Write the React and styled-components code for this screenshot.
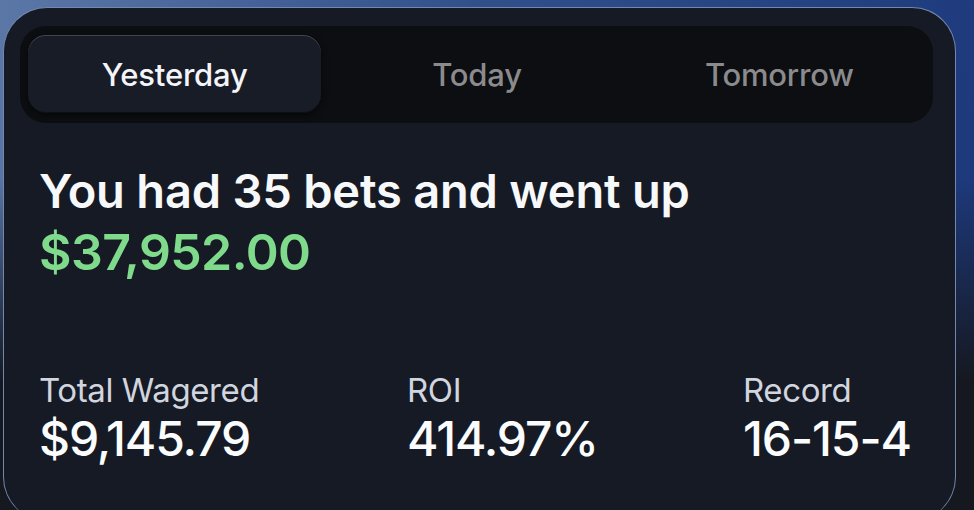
import React, { useState } from 'react';
import styled, { createGlobalStyle } from 'styled-components';

const Global = createGlobalStyle`
  html, body {
    margin: 0;
    padding: 0;
    width: 974px;
    height: 510px;
    overflow: hidden;
  }
  body {
    background:
      linear-gradient(to bottom, rgba(20, 23, 30, 0) 0%, rgba(20, 23, 30, 0) 35%, #15181f 75%),
      linear-gradient(100deg, #5a77a6 0%, #31508a 45%, #1b377b 100%);
    font-family: Inter, "Noto Sans", sans-serif;
  }
`

const Page = styled.div`
  width: 974px;
  height: 510px;
  padding: 7px 18px 0 3px;
  box-sizing: border-box;
  overflow: hidden;
`

const Card = styled.div`
  height: 514px;
  background: #161a24;
  border-radius: 44px;
  border: 1px solid #7388b0;
  border-bottom: none;
  padding: 18px 22px 0 16px;
  box-sizing: border-box;
`

const TabBar = styled.div`
  display: grid;
  grid-template-columns: repeat(3, 1fr);
  gap: 9px;
  height: 97px;
  background: #0d0e11;
  border-radius: 26px;
  padding: 9px 7px 10px 8px;
  box-sizing: border-box;
`

const Tab = styled.button`
  border: none;
  margin: 0;
  padding: 0;
  font-family: Inter, "Noto Sans", sans-serif;
  font-size: 31px;
  font-weight: 500;
  letter-spacing: -0.2px;
  cursor: pointer;
  border-radius: 18px;
  color: ${p => (p.$active ? '#f4f5f8' : '#8b8b8e')};
  background: ${p => (p.$active ? '#181c27' : 'transparent')};
  box-shadow: ${p =>
    p.$active
      ? 'inset 0 1px 0 rgba(255,255,255,0.18), inset 0 -1px 0 rgba(0,0,0,0.4), 0 2px 6px rgba(0,0,0,0.6)'
      : 'none'};
`

const Summary = styled.div`
  padding: 39px 0 0 19px;
`

const Headline = styled.div`
  font-size: 47px;
  font-weight: 600;
  letter-spacing: -0.2px;
  line-height: 58px;
  color: #f7f8fa;
`

const Amount = styled.div`
  margin-top: 3px;
  font-size: 50px;
  font-weight: 600;
  letter-spacing: -0.6px;
  line-height: 58px;
  color: #7fdb8b;
`

const Stats = styled.div`
  display: grid;
  grid-template-columns: 368px 336px 1fr;
  padding: 87px 0 0 19px;
`

const Stat = styled.div`
  display: flex;
  flex-direction: column;
`

const Label = styled.span`
  font-size: 33px;
  font-weight: 400;
  letter-spacing: -0.4px;
  line-height: 44px;
  color: #d1d5df;
`

const Value = styled.span`
  font-size: 48px;
  font-weight: 500;
  letter-spacing: -1.1px;
  line-height: 54px;
  color: #fbfcfd;
`

const tabs = ['Yesterday', 'Today', 'Tomorrow'];

const stats = [
  { label: 'Total Wagered', value: '$9,145.79' },
  { label: 'ROI', value: '414.97%' },
  { label: 'Record', value: '16-15-4' },
];

const App = () => {
  const [active, setActive] = useState('Yesterday');

  return (
    <Page>
      <Global />
      <Card>
        <TabBar>
          {tabs.map(t => (
            <Tab key={t} $active={t === active} onClick={() => setActive(t)}>
              {t}
            </Tab>
          ))}
        </TabBar>
        <Summary>
          <Headline>You had 35 bets and went up</Headline>
          <Amount>$37,952.00</Amount>
        </Summary>
        <Stats>
          {stats.map(s => (
            <Stat key={s.label}>
              <Label>{s.label}</Label>
              <Value>{s.value}</Value>
            </Stat>
          ))}
        </Stats>
      </Card>
    </Page>
  );
}

export default App;
